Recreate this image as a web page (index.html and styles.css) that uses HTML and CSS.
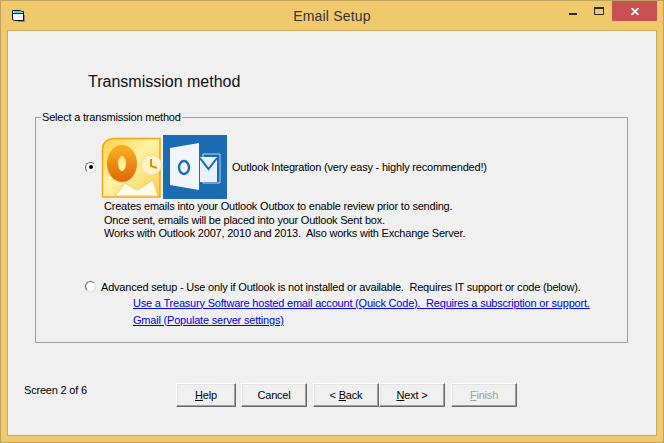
FILE: index.html
```html
<!DOCTYPE html>
<html lang="en">
<head>
<meta charset="utf-8">
<title>Email Setup</title>
<link rel="stylesheet" href="styles.css">
</head>
<body>
<div class="window">
  <header class="titlebar">
    <svg class="app-icon" width="14" height="12" viewBox="0 0 14 12">
      <path d="M.5 .5h8l1 1h2v9h-9l-2-1z" fill="#fff" stroke="#111"/>
      <path d="M2 1h7l1 2H2z" fill="#35e4f2"/>
      <path d="M1 3.5h10" stroke="#111"/>
      <path d="M12.5 5v6.5H6" fill="none" stroke="#8d8a70"/>
    </svg>
    <span class="title">Email Setup</span>
    <div class="controls">
      <span class="ctl ctl-min"><svg width="8" height="2"><rect width="8" height="2" fill="#2a2a2a"/></svg></span>
      <span class="ctl ctl-max"><svg width="10" height="8"><path d="M.5 .5h9v7h-9z" fill="none" stroke="#2a2a2a"/><rect width="10" height="2" fill="#2a2a2a"/></svg></span>
      <span class="ctl ctl-close"><svg width="8" height="7" viewBox="0 0 8 7"><path d="M.5 0l7 7M7.5 0l-7 7" stroke="#fff" stroke-width="1.8" fill="none"/></svg></span>
    </div>
  </header>
  <main class="client">
    <h1 class="heading">Transmission method</h1>
    <fieldset class="group">
      <legend class="legend">Select a transmission method</legend>
      <div class="opt-main">
        <span class="radio checked"></span>
        <svg class="icon-2007" width="60" height="64" viewBox="0 0 60 64">
          <defs>
            <linearGradient id="bg07" x1="0" y1="0" x2="1" y2="1">
              <stop offset="0" stop-color="#fbcf45"/><stop offset=".45" stop-color="#fff2a6"/><stop offset=".7" stop-color="#fde27a"/><stop offset="1" stop-color="#f9cf45"/>
            </linearGradient>
            <linearGradient id="o07" x1="0" y1="0" x2="0" y2="1">
              <stop offset="0" stop-color="#f8a91f"/><stop offset="1" stop-color="#e2700c"/>
            </linearGradient>
          </defs>
          <path d="M12 3.5h47v58.500H1.500V14Q1.500 5 12 3.500z" fill="url(#bg07)" stroke="#eda81e" stroke-width="1.500"/>
          <path d="M14 61l10-13 12 7 16-10 5 16z" fill="#fffbe6" stroke="#eccb78"/>
          <ellipse cx="21" cy="28.500" rx="9.500" ry="13" fill="none" stroke="url(#o07)" stroke-width="11"/>
          <circle cx="50.500" cy="30" r="10" fill="#fff5c9" stroke="#f6dd90"/>
          <path d="M50 24v7l6 2" fill="none" stroke="#dc8a1c" stroke-width="2"/>
        </svg>
        <svg class="icon-2013" width="64" height="64" viewBox="0 0 64 64">
          <rect width="64" height="64" fill="#1c6cb3"/>
          <path d="M40 19h17v29H40z" fill="#1c6cb3" stroke="#b9d2e8" stroke-width="1"/>
          <path d="M37 22h17v25H37z" fill="#e8f0f8"/>
          <path d="M37 23l8.500 11 8.500-11" fill="none" stroke="#1c6cb3" stroke-width="2"/>
          <path d="M7 13l29-5v47l-29-5z" fill="#f1f5f9"/>
          <ellipse cx="21" cy="32.500" rx="5" ry="6.500" fill="none" stroke="#1c6cb3" stroke-width="2.400"/>
        </svg>
        <span class="opt-label">Outlook Integration (very easy - highly recommended!)</span>
      </div>
      <p class="desc">Creates emails into your Outlook Outbox to enable review prior to sending.<br>Once sent, emails will be placed into your Outlook Sent box.<br>Works with Outlook 2007, 2010 and 2013.&nbsp; Also works with Exchange Server.</p>
      <div class="opt-adv">
        <span class="radio"></span>
        <span class="adv-label">Advanced setup - Use only if Outlook is not installed or available.&nbsp; Requires IT support or code (below).</span>
      </div>
      <a class="link" href="#">Use a Treasury Software hosted email account (Quick Code).&nbsp; Requires a subscription or support.</a>
      <a class="link" href="#">Gmail (Populate server settings)</a>
    </fieldset>
    <footer class="footer">
      <span class="screen">Screen 2 of 6</span>
      <div class="buttons">
        <button class="btn btn-help"><u>H</u>elp</button>
        <button class="btn btn-cancel">Cancel</button>
        <button class="btn gap">&lt; <u>B</u>ack</button>
        <button class="btn"><u>N</u>ext &gt;</button>
        <button class="btn gap disabled"><u>F</u>inish</button>
      </div>
    </footer>
  </main>
</div>
</body>
</html>
```
FILE: styles.css
```css
html, body { margin: 0; padding: 0; }
body { width: 664px; height: 443px; overflow: hidden; font-family: "Liberation Sans", Arial, sans-serif; font-size: 11px; letter-spacing: -0.2px; color: #000; }
.window { box-sizing: border-box; width: 664px; height: 443px; background: #f1c96d; border: 1px solid #bda15c; display: flex; flex-direction: column; padding: 0 6px 6px; }
.titlebar { height: 29px; flex: none; display: flex; align-items: flex-start; position: relative; justify-content: center; }
.app-icon { position: absolute; left: 5px; top: 9px; }
.title { font-size: 14px; color: #333; line-height: 30px; letter-spacing: .2px; }
.controls { position: absolute; right: 0; top: 0; display: flex; }
.ctl { box-sizing: border-box; width: 26px; height: 20px; display: flex; justify-content: center; align-items: flex-start; }
.ctl svg { display: block; }
.ctl-min { padding-top: 12px; }
.ctl-max { padding-top: 6px; }
.ctl-close { width: 45px; background: #c75050; padding-top: 7px; }
.client { flex: 1; min-height: 0; background: #f0f0f0; border: 1px solid #c9aa60; display: flex; flex-direction: column; padding: 0 28px 0 27px; }
.heading { margin: 0; padding: 41px 0 0 53px; font-size: 16px; font-weight: 400; letter-spacing: 0; line-height: 19px; height: 39px; flex: none; color: #111; }
.group { margin: 0; box-sizing: border-box; height: 232px; flex: none; border: 1px solid #a0a0a0; padding: 0; min-width: 0; }
.legend { padding: 0 1px; margin-left: 5px; line-height: 13px; }
.opt-main { display: flex; align-items: center; margin-top: 11px; height: 64px; padding-left: 49px; }
.radio { box-sizing: border-box; width: 11px; height: 11px; border-radius: 50%; background: #fff; border: 1px solid; border-color: #666 #ddd #ddd #666; flex: none; position: relative; }
.radio.checked::after { content: ""; position: absolute; left: 2.500px; top: 2.500px; width: 4px; height: 4px; border-radius: 50%; background: #000; }
.icon-2007 { margin-left: 5px; flex: none; overflow: visible; }
.icon-2013 { margin-left: 2px; flex: none; }
.opt-label { margin-left: 5px; }
.desc { margin: 1px 0 0 68px; line-height: 13.500px; }
.opt-adv { display: flex; align-items: center; margin-top: 40px; padding-left: 49px; }
.adv-label { margin-left: 5px; }
.link { display: block; margin: 4px 0 0 97px; color: #00e; line-height: 13px; text-decoration: underline; width: max-content; }
.footer { flex: none; display: flex; margin-top: 40px; }
.screen { margin-left: -11px; line-height: 13px; padding-top: 1px; width: 152px; }
.buttons { display: flex; }
.btn { box-sizing: border-box; width: 66px; height: 24px; padding: 0; margin: 0; font: inherit; letter-spacing: inherit; color: #000; background: #f0f0f0; border: 1px solid; border-color: #fff #696969 #696969 #fff; box-shadow: inset -1px -1px 0 #a0a0a0, inset 1px 1px 0 #e3e3e3; }
.btn-help { width: 60px; }
.btn-cancel { margin-left: 5px; }
.gap { margin-left: 6px; }
.disabled { color: #a0a0a0; }
```
